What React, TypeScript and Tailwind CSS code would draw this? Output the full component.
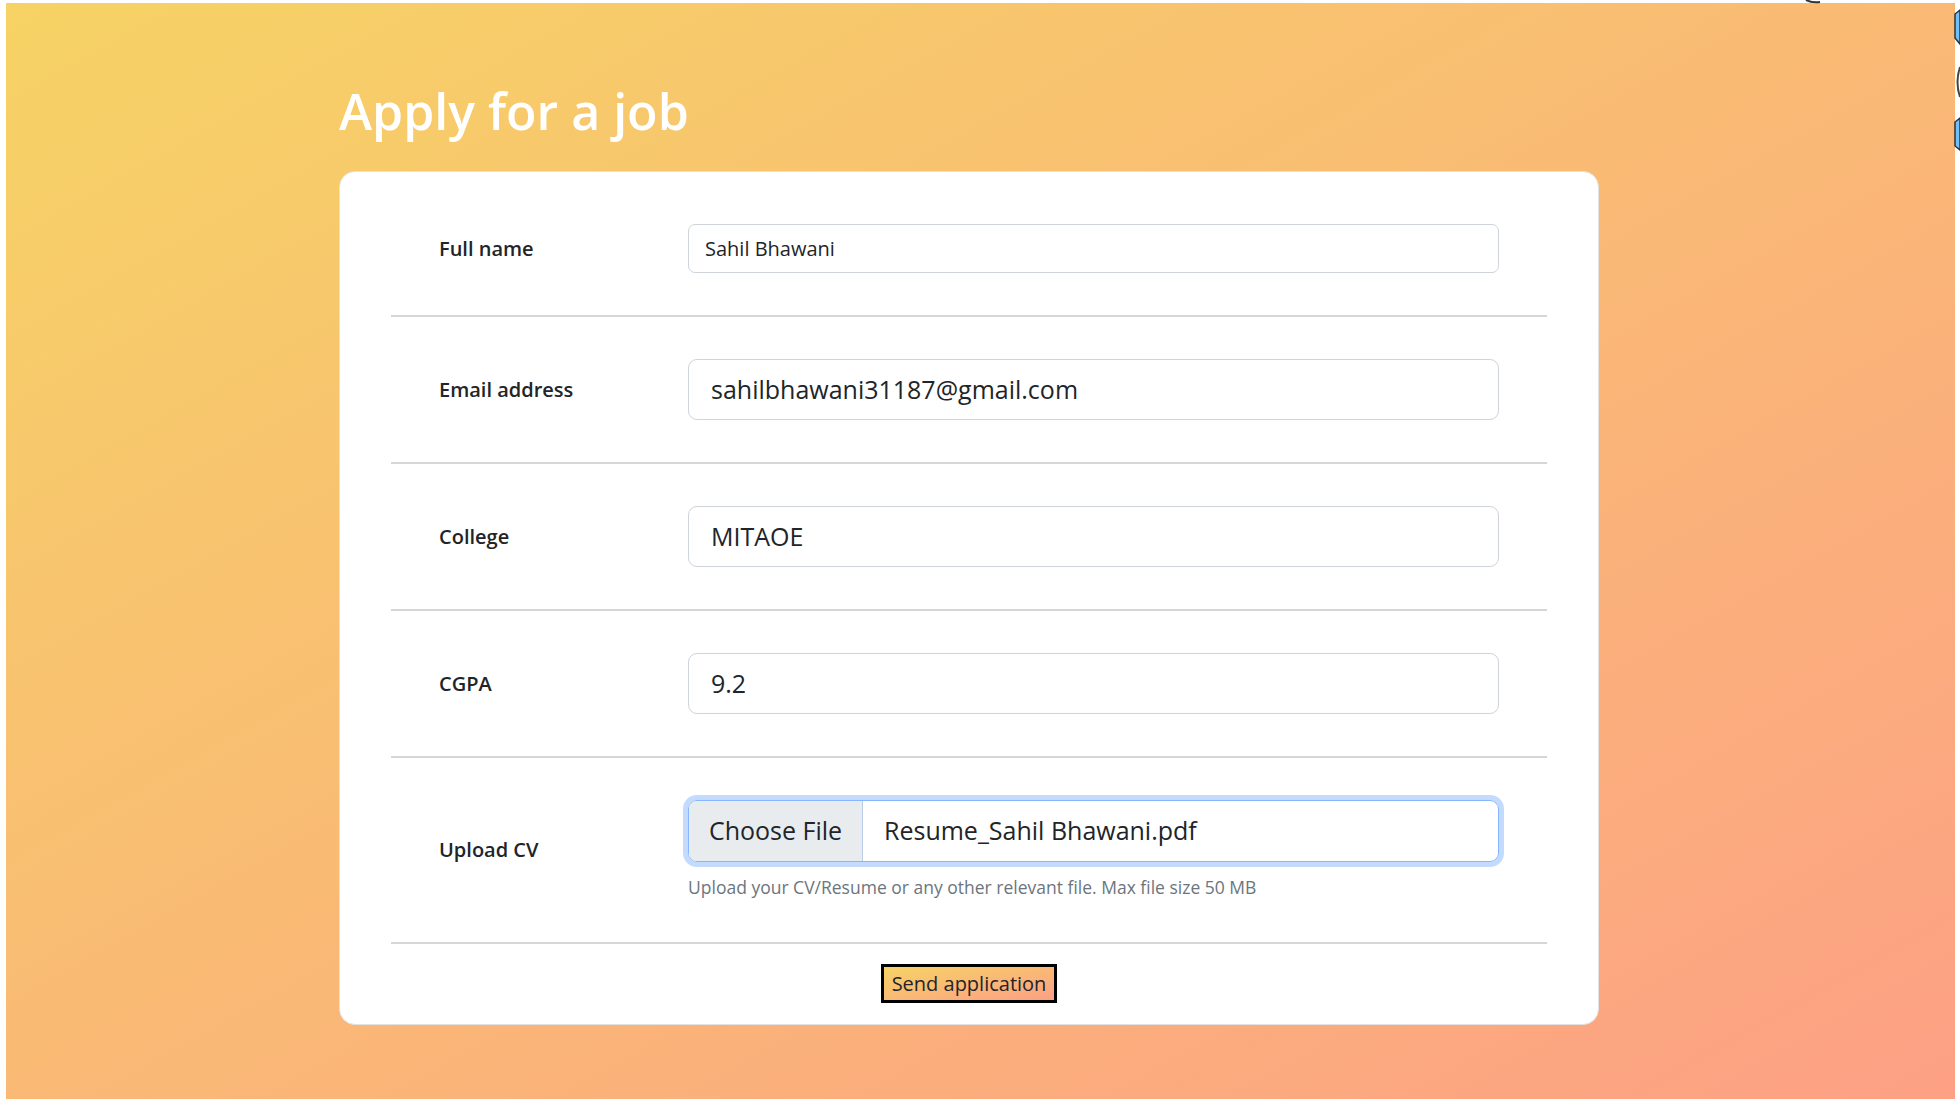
import React from "react";

function Hr() {
  return <div className="h-[2px] bg-[#d6d6d6] my-[42px]" />;
}

function Label({ children }: { children: React.ReactNode }) {
  return (
    <div className="w-[249px] shrink-0 text-[20px] leading-[30px] font-semibold text-[#212529]">
      {children}
    </div>
  );
}

export default function App() {
  const font = { fontFamily: "'Open Sans', 'Noto Sans', sans-serif" };
  return (
    <div className="w-[1960px] h-[1106px] bg-white pl-[6px] pt-[3px] relative overflow-hidden" style={font}>
      <div className="w-[1949px] h-[1096px] bg-[linear-gradient(to_bottom_right,#f6d365,#fda085)] pl-[333px] pt-[78px]">
        <h1 className="text-[50px] leading-[60px] font-semibold text-white">Apply for a job</h1>
        <div className="mt-[30px] w-[1260px] h-[854px] bg-white border border-[#e2e2e2] rounded-[16px] pt-[52px] px-[51px]">
          {/* Full name */}
          <div className="flex items-center px-[48px] pr-[47px]">
            <Label>Full name</Label>
            <div className="w-[811px] h-[49px] border border-[#ced4da] rounded-[7px] pl-[16px] flex items-center text-[20px] text-[#212529]">
              Sahil Bhawani
            </div>
          </div>
          <Hr />
          {/* Email */}
          <div className="flex items-center px-[48px] pr-[47px]">
            <Label>Email address</Label>
            <div className="w-[811px] h-[61px] border border-[#ced4da] rounded-[9px] pl-[22px] flex items-center text-[25px] text-[#212529]">
              sahilbhawani31187@gmail.com
            </div>
          </div>
          <Hr />
          {/* College */}
          <div className="flex items-center px-[48px] pr-[47px]">
            <Label>College</Label>
            <div className="w-[811px] h-[61px] border border-[#ced4da] rounded-[9px] pl-[22px] flex items-center text-[25px] text-[#212529]">
              MITAOE
            </div>
          </div>
          <Hr />
          {/* CGPA */}
          <div className="flex items-center px-[48px] pr-[47px]">
            <Label>CGPA</Label>
            <div className="w-[811px] h-[61px] border border-[#ced4da] rounded-[9px] pl-[22px] flex items-center text-[25px] text-[#212529]">
              9.2
            </div>
          </div>
          <Hr />
          {/* Upload CV */}
          <div className="flex items-center px-[48px] pr-[47px]">
            <Label>Upload CV</Label>
            <div className="w-[811px]">
              <div className="h-[62px] border border-[#86b7fe] rounded-[9px] shadow-[0_0_0_5px_rgba(13,110,253,0.25)] flex items-stretch overflow-hidden text-[25px] text-[#212529]">
                <div className="w-[174px] shrink-0 bg-[#e9ecef] border-r border-[#b9cdea] flex items-center justify-center">
                  Choose File
                </div>
                <div className="pl-[21px] flex items-center">Resume_Sahil Bhawani.pdf</div>
              </div>
              <div className="mt-[12px] text-[17.5px] leading-[26px] text-[#6c757d]">
                Upload your CV/Resume or any other relevant file. Max file size 50 MB
              </div>
            </div>
          </div>
          <div className="h-[2px] bg-[#d6d6d6] mt-[42px]" />
          <div className="flex justify-center mt-[20px]">
            <button className="w-[176px] h-[39px] border-[3px] border-black bg-[linear-gradient(to_bottom_right,#f6d365,#fda085)] text-[20px] text-[#212529] flex items-center justify-center">
              Send application
            </button>
          </div>
        </div>
      </div>
      {/* artifacts at right edge */}
      <svg className="absolute right-0 top-0" width="6" height="160" viewBox="0 0 6 160">
        <path d="M6 10 L1 14 L1 38 L6 44 Z" fill="#6ec1f8" stroke="#333" strokeWidth="1.5" />
        <path d="M6 67 Q1 82 6 97" fill="none" stroke="#444" strokeWidth="2" />
        <path d="M6 118 L1 122 L1 146 L6 150 Z" fill="#6ec1f8" stroke="#333" strokeWidth="1.5" />
      </svg>
      <svg className="absolute left-[1800px] top-0" width="24" height="6" viewBox="0 0 24 6">
        <path d="M6 0 Q12 3 20 2" fill="none" stroke="#333" strokeWidth="2" />
      </svg>
    </div>
  );
}
